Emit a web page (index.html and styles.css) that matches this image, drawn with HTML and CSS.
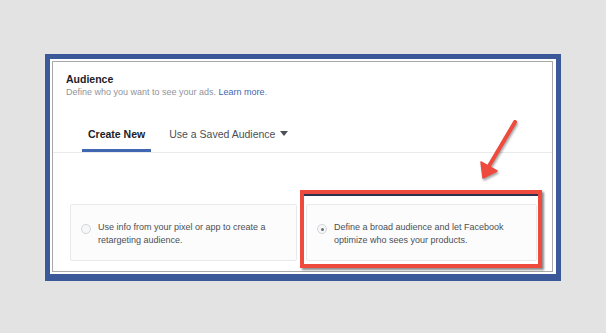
FILE: index.html
```html
<!DOCTYPE html>
<html lang="en">
<head>
    <meta charset="UTF-8">
    <meta name="viewport" content="width=device-width, initial-scale=1.0">
    <title>Audience</title>
    <link rel="stylesheet" href="styles.css">
</head>
<body>
    <div class="frame">
        <div class="panel">
            <div class="title">Audience</div>
            <div class="subtitle">Define who you want to see your ads. <a href="#">Learn more</a>.</div>

            <div class="tabs">
                <div class="tab active">Create New</div>
                <div class="tab">Use a Saved Audience <span class="caret"></span></div>
            </div>

            <div class="options">
                <div class="option">
                    <span class="radio"></span>
                    <span class="option-text">Use info from your pixel or app to create a retargeting audience.</span>
                </div>
                <div class="option">
                    <span class="radio checked"></span>
                    <span class="option-text">Define a broad audience and let Facebook optimize who sees your products.</span>
                </div>
            </div>
        </div>

        <!-- annotation drawn over the screenshot -->
        <div class="highlight"></div>
        <svg class="arrow" width="55" height="70" viewBox="0 0 55 70">
            <line x1="45" y1="7" x2="19" y2="51" stroke="#ee4a3d" stroke-width="4" stroke-linecap="round"/>
            <polygon points="11,47 27,56 13,63" fill="#ee4a3d" stroke="#ee4a3d" stroke-width="1.5" stroke-linejoin="round"/>
        </svg>
    </div>
</body>
</html>
```

FILE: styles.css
```css
body {
    margin: 0;
    background-color: #e3e3e3;
    font-family: "Liberation Sans", Arial, sans-serif;
}
.frame {
    position: relative;
    width: 516px;
    margin: 54px 0 0 45px;
    padding: 2px 3px 2px 2px;
    border: 5px solid #3b5998;
    border-bottom-width: 7px;
    background-color: #ffffff;
    box-sizing: border-box;
}
.panel {
    height: 211px;
    padding: 11px 13px 0 13px;
    border: 1px solid #a9a9a9;
    box-sizing: border-box;
    background-color: #ffffff;
}
.title {
    font-size: 10.5px;
    line-height: 13px;
    font-weight: bold;
    color: #1d2129;
}
.subtitle {
    margin-top: 1px;
    font-size: 9px;
    line-height: 11px;
    color: #90949c;
}
.subtitle a {
    color: #4267b2;
    text-decoration: none;
}
.tabs {
    display: flex;
    gap: 12px;
    margin: 30px -13px 0 -13px;
    padding-left: 29px;
    border-bottom: 1px solid #e9eaed;
}
.tab {
    padding: 0 6px 8px 6px;
    font-size: 10.5px;
    line-height: 13px;
    color: #4b4f56;
    border-bottom: 3px solid transparent;
}
.tab.active {
    font-weight: bold;
    color: #1d2129;
    border-bottom-color: #4267b2;
}
.caret {
    display: inline-block;
    width: 0;
    height: 0;
    margin-left: 2px;
    border-left: 4px solid transparent;
    border-right: 4px solid transparent;
    border-top: 5px solid #4b4f56;
    vertical-align: 2px;
}
.options {
    display: grid;
    grid-template-columns: 227px 1fr;
    gap: 9px;
    margin: 51px 2px 0 4px;
}
.option {
    display: flex;
    align-items: flex-start;
    gap: 7px;
    height: 57px;
    padding: 16px 10px 0 10px;
    border: 1px solid #e9eaed;
    border-radius: 2px;
    box-sizing: border-box;
    background-color: #fcfcfc;
}
.radio {
    flex: none;
    width: 10px;
    height: 10px;
    margin-top: 3px;
    border: 1px solid #d3d5da;
    border-radius: 50%;
    box-sizing: border-box;
    background-color: #f6f7f9;
    position: relative;
}
.radio.checked::after {
    content: "";
    position: absolute;
    left: 2.5px;
    top: 2.5px;
    width: 3px;
    height: 3px;
    border-radius: 50%;
    background-color: #6b6f76;
}
.option-text {
    font-size: 9px;
    line-height: 13px;
    color: #4b4f56;
}
.highlight {
    position: absolute;
    left: 250px;
    top: 131px;
    width: 242px;
    height: 78px;
    border: 4px solid #ee4a3d;
    box-sizing: border-box;
    box-shadow: 2px 2px 2px rgba(0, 0, 0, 0.45), inset 0 2px 0 #2e3350;
}
.arrow {
    position: absolute;
    left: 420px;
    top: 56px;
    filter: drop-shadow(1px 2px 1px rgba(0, 0, 0, 0.35));
}
```
